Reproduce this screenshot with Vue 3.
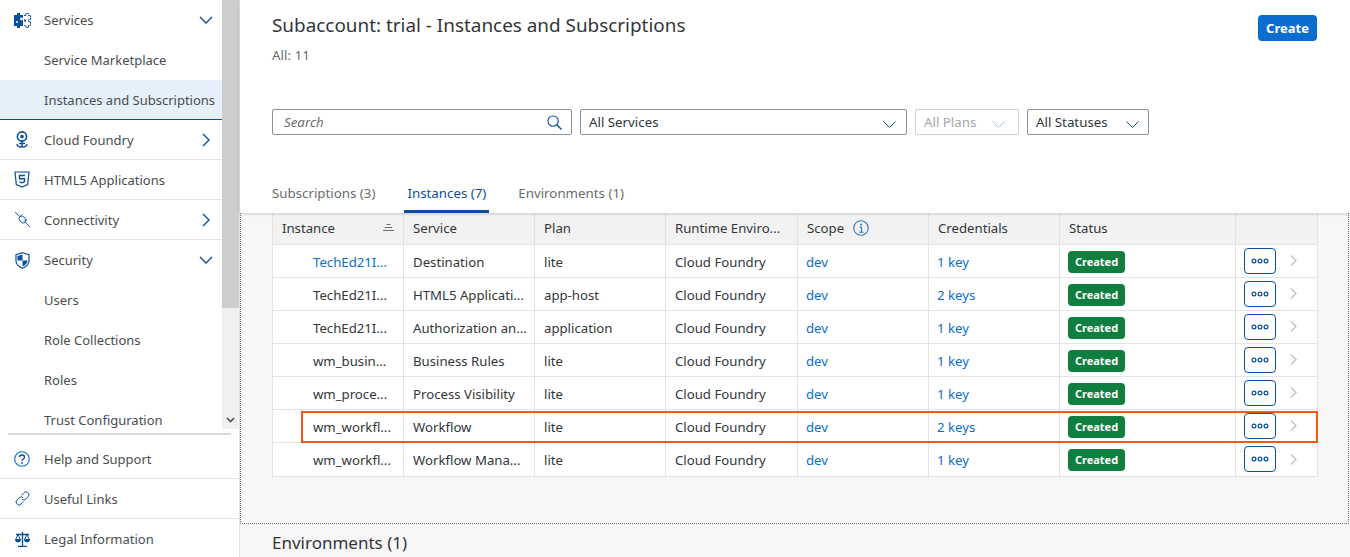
<template>
  <div class="page">
    <aside class="sidebar">
      <div class="nav-top">
        <nav class="nav-scroll">
          <div v-for="item in navItems" :key="item.label" class="nav-row" :class="{ sub: item.sub, selected: item.selected, lined: item.lined }">
            <span class="nav-icon">
              <svg v-if="item.icon === 'services'" width="17" height="15" viewBox="0 0 17 15">
                <path d="M0 2h3V0h3v2h3v11H6v2H3v-2H0z" fill="#0a4f9e" />
                <circle cx="7.500" cy="6" r="1.400" fill="#fff" />
                <circle cx="3" cy="9" r="1" fill="#fff" />
                <path d="M10 2.500h2V.5h2.500v2h2v4h-2v2h2v4h-2v2H12v-2h-2" fill="none" stroke="#0a4f9e" stroke-width="1" stroke-dasharray="2 .6" />
                <path d="M10 6.500h2v2h-2z" fill="#0a4f9e" />
              </svg>
              <svg v-else-if="item.icon === 'cloud'" width="16" height="18" viewBox="0 0 16 18" fill="none" stroke="#0a4f9e">
                <circle cx="8" cy="5.500" r="4.600" stroke-width="1.600" />
                <circle cx="8" cy="5.500" r="1.800" fill="#0a4f9e" stroke="none" />
                <path d="M8 9v7M3 13c0 2 2 3 5 3s5-1 5-3M5 12.500h6" stroke-width="1.400" />
              </svg>
              <svg v-else-if="item.icon === 'html5'" width="16" height="17" viewBox="0 0 16 17" fill="none" stroke="#0a4f9e">
                <path d="M1 1h14l-1.300 12.500L8 16l-5.700-2.500z" stroke-width="1.200" />
                <path d="M11 4.500H5.500v3.200H10.500v3L8 11.800l-2.500-1" stroke-width="1.400" />
              </svg>
              <svg v-else-if="item.icon === 'plug'" width="15" height="15" viewBox="0 0 15 15" fill="none" stroke="#0a4f9e" stroke-width=".9">
                <path d="M0 0l4 4M10.500 10.500L15 15" />
                <ellipse cx="7.500" cy="7.500" rx="4" ry="2.800" transform="rotate(45 7.500 7.500)" />
                <path d="M7 2.500L4.500 5M11.500 7L9 9.500" />
              </svg>
              <svg v-else-if="item.icon === 'shield'" width="15" height="17" viewBox="0 0 15 17">
                <path d="M7.500 0.700l6.500 2v6c0 3.500-3 6-6.500 7.600C4 14.700 1 12.200 1 8.700v-6z" fill="#fff" stroke="#0a4f9e" stroke-width="1.200" />
                <path d="M7.500 2.500L2.500 4v4.500h5zM7.500 8.500v6c2.500-1.200 5-3 5-6z" fill="#0a4f9e" />
              </svg>
            </span>
            <span class="nav-label">{{ item.label }}</span>
            <svg v-if="item.arrow === 'down'" class="nav-arrow" width="14" height="8" viewBox="0 0 14 8" fill="none" stroke="#0a4f9e" stroke-width="1.400">
              <path d="M1 1l6 6 6-6" />
            </svg>
            <svg v-else-if="item.arrow === 'right'" class="nav-arrow" width="14" height="14" viewBox="0 0 14 14" fill="none" stroke="#0a4f9e" stroke-width="1.400">
              <path d="M4 1l6 6-6 6" />
            </svg>
          </div>
        </nav>
        <div class="scrollbar">
          <div class="thumb"></div>
          <svg class="scroll-down" width="9" height="6" viewBox="0 0 9 6" fill="none" stroke="#505050" stroke-width="1.600">
            <path d="M1 1l3.500 3.500L8 1" />
          </svg>
        </div>
      </div>
      <div class="nav-divider"></div>
      <div class="nav-bottom">
        <div v-for="item in bottomItems" :key="item.label" class="nav-row bottom-row">
          <span class="nav-icon">
            <svg v-if="item.icon === 'help'" width="16" height="16" viewBox="0 0 16 16" fill="none" stroke="#0a6ed1" stroke-width="1.100">
              <circle cx="8" cy="8" r="7.300" />
              <path d="M5.500 6.200C5.500 4.700 6.700 4 8 4s2.500 .8 2.500 2.200C10.500 8 8 8 8 10" stroke="#0a4f9e" stroke-width="1.300" />
              <circle cx="8" cy="12" r=".9" fill="#0a4f9e" stroke="none" />
            </svg>
            <svg v-else-if="item.icon === 'link'" width="15" height="15" viewBox="0 0 15 15" fill="none" stroke="#0a4f9e" stroke-width="1">
              <path d="M9 1.800a2.400 2.400 0 0 1 3.700 0l.5.5a2.400 2.400 0 0 1 0 3.400l-2.500 2.500a2.400 2.400 0 0 1-3.700 0" />
              <path d="M6 13.200a2.400 2.400 0 0 1-3.700 0l-.5-.5a2.400 2.400 0 0 1 0-3.400l2.500-2.500a2.400 2.400 0 0 1 3.700 0" />
              <path d="M9 1.800L6.500 4.300M6 13.200l2.500-2.500" />
            </svg>
            <svg v-else width="15" height="15" viewBox="0 0 15 15" fill="none" stroke="#0a4f9e" stroke-width="1">
              <path d="M7.500 0v14M3 14.500h9M1 2.500h13" stroke-width="1.300" />
              <path d="M3 2.500L.7 7.500h4.600zM12 2.500L9.700 7.500h4.600z" />
              <path d="M.5 7.500a2.500 2.500 0 0 0 5 0zM9.500 7.500a2.500 2.500 0 0 0 5 0z" fill="#0a4f9e" />
            </svg>
          </span>
          <span class="nav-label">{{ item.label }}</span>
        </div>
      </div>
    </aside>

    <main class="main">
      <header class="head">
        <div class="title-row">
          <div>
            <h1>Subaccount: trial - Instances and Subscriptions</h1>
            <p class="count">All: 11</p>
          </div>
          <button class="btn-create">Create</button>
        </div>
        <div class="filters">
          <div class="field search">
            <span class="placeholder">Search</span>
            <svg width="15" height="15" viewBox="0 0 16 16" fill="none" stroke="#0a4f9e" stroke-width="1.200">
              <circle cx="6.500" cy="6.500" r="5.500" />
              <path d="M10.500 10.500l5 5" stroke-width="1.500" />
            </svg>
          </div>
          <div class="field services">
            <span>All Services</span>
            <svg class="caret" width="13" height="7" viewBox="0 0 13 7" fill="none" stroke="#0a4f9e"><path d="M.5.500l6 6 6-6" /></svg>
          </div>
          <div class="field plans">
            <span>All Plans</span>
            <svg class="caret" width="13" height="7" viewBox="0 0 13 7" fill="none" stroke="#a9c4e0"><path d="M.5.500l6 6 6-6" /></svg>
          </div>
          <div class="field statuses">
            <span>All Statuses</span>
            <svg class="caret" width="13" height="7" viewBox="0 0 13 7" fill="none" stroke="#0a4f9e"><path d="M.5.500l6 6 6-6" /></svg>
          </div>
        </div>
        <div class="tabs">
          <div v-for="tab in tabs" :key="tab.label" class="tab" :class="{ active: tab.active }">{{ tab.label }}</div>
        </div>
      </header>

      <section class="content">
        <div class="table-wrap">
          <table>
            <colgroup>
              <col v-for="(w, i) in colWidths" :key="i" :style="{ width: w + 'px' }" />
            </colgroup>
            <thead>
              <tr>
                <th>
                  <div class="th-sort">
                    <span>Instance</span>
                    <svg width="11" height="8" viewBox="0 0 11 8" fill="none" stroke="#6a6d70">
                      <path d="M3.500 .5h4M2 3.500h7M0 6.500h11" />
                    </svg>
                  </div>
                </th>
                <th>Service</th>
                <th>Plan</th>
                <th>Runtime Enviro...</th>
                <th>
                  <span class="th-scope">
                    Scope
                    <svg width="16" height="16" viewBox="0 0 16 16" fill="none" stroke="#2f77b8">
                      <circle cx="8" cy="8" r="7.300" stroke-width="1.100" />
                      <path d="M6.500 7h2v5M6 12.200h4.500" stroke-width="1.100" />
                      <circle cx="8" cy="4.500" r="1" fill="#2f77b8" stroke="none" />
                    </svg>
                  </span>
                </th>
                <th>Credentials</th>
                <th>Status</th>
                <th></th>
              </tr>
            </thead>
            <tbody>
              <tr v-for="(row, i) in rows" :key="i">
                <td class="inst" :class="{ link: i === 0 }">{{ row.instance }}</td>
                <td>{{ row.service }}</td>
                <td>{{ row.plan }}</td>
                <td>Cloud Foundry</td>
                <td class="link tight">dev</td>
                <td class="link tight">{{ row.keys }}</td>
                <td class="tight"><span class="badge">Created</span></td>
                <td class="tight action-cell">
                  <div class="actions">
                    <button class="btn-more">
                      <svg width="18" height="6" viewBox="0 0 18 6" fill="none" stroke="#0a4f9e" stroke-width="1.200">
                        <circle cx="3" cy="3" r="1.900" /><circle cx="9" cy="3" r="1.900" /><circle cx="15" cy="3" r="1.900" />
                      </svg>
                    </button>
                    <svg width="7" height="11" viewBox="0 0 7 11" fill="none" stroke="#8a8d90"><path d="M1 .5l5 5-5 5" /></svg>
                  </div>
                </td>
              </tr>
            </tbody>
          </table>
          <div class="highlight"></div>
        </div>
      </section>
      <h2 class="env-title">Environments (1)</h2>
    </main>
  </div>
</template>

<script setup>
const navItems = [
  { label: 'Services', icon: 'services', arrow: 'down' },
  { label: 'Service Marketplace', sub: true },
  { label: 'Instances and Subscriptions', sub: true, selected: true },
  { label: 'Cloud Foundry', icon: 'cloud', arrow: 'right', lined: true },
  { label: 'HTML5 Applications', icon: 'html5', lined: true },
  { label: 'Connectivity', icon: 'plug', arrow: 'right', lined: true },
  { label: 'Security', icon: 'shield', arrow: 'down' },
  { label: 'Users', sub: true },
  { label: 'Role Collections', sub: true },
  { label: 'Roles', sub: true },
  { label: 'Trust Configuration', sub: true }
]

const bottomItems = [
  { label: 'Help and Support', icon: 'help' },
  { label: 'Useful Links', icon: 'link' },
  { label: 'Legal Information', icon: 'scale' }
]

const tabs = [
  { label: 'Subscriptions (3)' },
  { label: 'Instances (7)', active: true },
  { label: 'Environments (1)' }
]

const colWidths = [131, 131, 131, 132, 131, 131, 176, 82]

const rows = [
  { instance: 'TechEd21I...', service: 'Destination', plan: 'lite', keys: '1 key' },
  { instance: 'TechEd21I...', service: 'HTML5 Applicati...', plan: 'app-host', keys: '2 keys' },
  { instance: 'TechEd21I...', service: 'Authorization an...', plan: 'application', keys: '1 key' },
  { instance: 'wm_busin...', service: 'Business Rules', plan: 'lite', keys: '1 key' },
  { instance: 'wm_proce...', service: 'Process Visibility', plan: 'lite', keys: '1 key' },
  { instance: 'wm_workfl...', service: 'Workflow', plan: 'lite', keys: '2 keys' },
  { instance: 'wm_workfl...', service: 'Workflow Mana...', plan: 'lite', keys: '1 key' }
]
</script>

<style>
html, body { margin: 0; height: 100%; overflow: hidden; }
</style>

<style scoped>
.page { display: flex; width: 1350px; height: 557px; overflow: hidden; font-family: "Noto Sans", "Liberation Sans", sans-serif; font-size: 13px; color: #32363a; background: #fff; }

.sidebar { width: 239px; flex: none; display: flex; flex-direction: column; overflow: hidden; border-right: 1px solid #e4e4e4; background: #fff; }
.nav-top { display: flex; flex: none; height: 429px; overflow: hidden; }
.nav-scroll { width: 222px; flex: none; }
.nav-row { height: 40px; display: flex; align-items: center; box-sizing: border-box; padding-right: 9px; white-space: nowrap; overflow: hidden; color: #4a4d50; }
.nav-row.lined { border-bottom: 1px solid #e4e4e4; }
.nav-row.selected { background: #e5f0fa; border-bottom: 1px solid #0a4f9e; }
.nav-icon { width: 44px; flex: none; display: flex; justify-content: center; }
.nav-label { flex: 1; }
.nav-arrow { flex: none; }
.scrollbar { width: 17px; flex: none; background: #f0f0f0; position: relative; }
.thumb { height: 308px; background: #cdcdcd; }
.scroll-down { position: absolute; left: 4px; bottom: 6px; }
.nav-divider { height: 2px; flex: none; margin: 4px 8px 4px; background: #d9d9d9; }
.nav-bottom { flex: none; }
.bottom-row { border-bottom: 1px solid #e4e4e4; }
.bottom-row:last-child { border-bottom: none; }

.main { flex: 1; min-width: 0; background: #f7f7f7; display: flex; flex-direction: column; }
.head { background: #fff; height: 213px; box-sizing: border-box; padding: 15px 33px 0 32px; box-shadow: 0 1px 3px rgba(0, 0, 0, .18); position: relative; z-index: 1; flex: none; }
.title-row { display: flex; justify-content: space-between; align-items: flex-start; height: 94px; }
h1 { margin: 0; font-size: 18.900px; font-weight: 400; line-height: 21px; }
.count { margin: 10px 0 0; font-size: 13.400px; color: #6a6d70; line-height: 18px; }
.btn-create { width: 59px; height: 26px; border: none; border-radius: 4px; background: #0a6ed1; color: #fff; font: 700 13px "Noto Sans", sans-serif; padding: 0; }

.filters { display: flex; gap: 8px; font-size: 13.300px; }
.field { height: 26px; box-sizing: border-box; border: 1px solid #89919a; border-radius: 2px; background: #fff; display: flex; align-items: center; justify-content: space-between; padding: 0 10px 0 8px; }
.caret { margin-top: 5px; }
.search { width: 300px; padding: 0 9px 0 11px; }
.placeholder { font-style: italic; color: #6a6d70; }
.services { width: 327px; }
.plans { width: 104px; color: #a4a6a8; border-color: #cfd1d3; padding-right: 13px; }
.statuses { width: 122px; padding-right: 9px; }

.tabs { display: flex; gap: 29px; margin-top: 45px; font-size: 13.300px; }
.tab { height: 33px; box-sizing: border-box; line-height: 26px; color: #6a6d70; }
.tab.active { color: #0a4f9e; border-bottom: 3px solid #0a4f9e; padding: 0 3px; }

.content { height: 311px; flex: none; box-sizing: border-box; padding: 0 31px; border-left: 1px dotted #6a6d70; border-right: 1px dotted #6a6d70; border-bottom: 1px dotted #6a6d70; margin-right: 1px; }
.table-wrap { position: relative; width: 1045px; }
table { border-collapse: collapse; table-layout: fixed; width: 1045px; background: #fff; font-size: 13.200px; }
th, td { box-sizing: border-box; border: 1px solid #e4e4e4; text-align: left; font-weight: 400; white-space: nowrap; overflow: hidden; }
th { height: 31px; padding: 0 9px; background: #f2f2f2; border-top: none; }
td { height: 33px; padding: 2px 9px 0; }
tbody tr:last-child td { height: 34px; }
td.tight { padding: 2px 8px 0; }
td.action-cell { padding: 0 8px; }
.th-sort { display: flex; align-items: center; justify-content: space-between; }
.th-scope { display: inline-flex; align-items: center; gap: 9px; }
.inst { padding-left: 40px; }
.link { color: #0a6ed1; }
.badge { display: inline-block; width: 57px; height: 22px; line-height: 21px; border-radius: 4px; background: #107e3e; color: #fff; font-size: 11px; font-weight: 700; text-align: center; vertical-align: middle; }
.actions { display: flex; align-items: center; gap: 14px; }
.btn-more { width: 32px; height: 26px; padding: 0; display: flex; align-items: center; justify-content: center; background: #fff; border: 1px solid #0a4f9e; border-radius: 4px; }
.highlight { position: absolute; left: 29px; top: 198px; width: 1017px; height: 32px; box-sizing: border-box; border: 2px solid #f4590f; pointer-events: none; }

.env-title { margin: 7px 0 0 32px; font-size: 17px; font-weight: 400; line-height: 24px; }
</style>
